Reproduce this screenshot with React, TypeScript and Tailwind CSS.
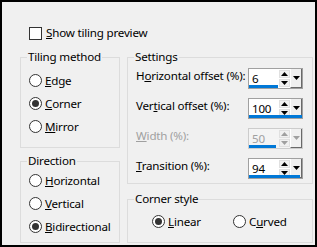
import React from "react";

function Radio({ checked, children, className = "" }: { checked?: boolean; children: React.ReactNode; className?: string }) {
  return (
    <div className={"flex items-center h-[23px] gap-[3px] " + className}>
      <span className="w-[13px] h-[13px] shrink-0 rounded-full border border-[#333333] bg-white flex items-center justify-center">
        {checked && <span className="w-[7px] h-[7px] rounded-full bg-[#333333]" />}
      </span>
      <span className="whitespace-nowrap">{children}</span>
    </div>
  );
}

function Group({ title, className = "", children }: { title: string; className?: string; children: React.ReactNode }) {
  return (
    <fieldset className={"border border-[#dcdcdc] " + className}>
      <legend className="ml-[6px] px-[1px] leading-[16px]">{title}</legend>
      {children}
    </fieldset>
  );
}

function Arrow({ up, color = "#000" }: { up?: boolean; color?: string }) {
  return (
    <svg width="7" height="4" viewBox="0 0 7 4">
      {up ? <path d="M0 4 L3.5 0 L7 4 Z" fill={color} /> : <path d="M0 0 L7 0 L3.5 4 Z" fill={color} />}
    </svg>
  );
}

function SpinBox({ value, bar, disabled }: { value: string; bar: number; disabled?: boolean }) {
  const arrow = disabled ? "#a0a0a0" : "#000";
  return (
    <div className={"relative flex w-[55px] h-[21px] border " + (disabled ? "border-[#cccccc] bg-[#f4f4f4]" : "border-[#a0a0a0] bg-white")}>
      <div className={"w-[30px] pl-[3px] pt-[2px] leading-[16px] " + (disabled ? "text-[#a0a0a0]" : "text-black")}>{value}</div>
      <div className="w-[11px] flex flex-col justify-center gap-[1px] py-[1px]">
        <div className="h-[8px] flex items-center justify-center bg-[#f0f0f0] border border-[#e0e0e0]">
          <Arrow up color={arrow} />
        </div>
        <div className="h-[8px] flex items-center justify-center bg-[#f0f0f0] border border-[#e0e0e0]">
          <Arrow color={arrow} />
        </div>
      </div>
      <div className="w-[12px] flex items-center justify-center bg-[#f0f0f0] border-l border-white border-r border-r-[#696969] border-b border-b-[#696969]">
        <Arrow color={arrow} />
      </div>
      <div className="absolute left-0 bottom-0 h-[3px] bg-[#0078d7]" style={{ width: bar }} />
    </div>
  );
}

function SpinRow({ label, value, bar, disabled }: { label: React.ReactNode; value: string; bar: number; disabled?: boolean }) {
  return (
    <div className="flex items-center h-[21px]">
      <span className={"w-[112px] mb-[5px] whitespace-nowrap " + (disabled ? "text-[#a0a0a0]" : "")}>{label}</span>
      <SpinBox value={value} bar={bar} disabled={disabled} />
    </div>
  );
}

export default function App() {
  return (
    <div className="w-[317px] h-[247px] bg-[#f0f0f0] border-2 border-black flex flex-col pt-[23px] pl-[18px] text-[11.6px] leading-[16px] tracking-[-0.2px] text-black font-['Noto_Sans','Liberation_Sans',sans-serif]">
      <div className="flex items-center h-[16px] ml-[9px] gap-[4px]">
        <span className="w-[13px] h-[13px] border border-[#333333] bg-white" />
        <span><u>S</u>how tiling preview</span>
      </div>

      <div className="mt-[8px] flex gap-[7px]">
        <div className="w-[100px] flex flex-col gap-[5px]">
          <Group title="Tiling method" className="h-[99px]">
            <div className="pt-[4px] pl-[8px]">
              <Radio><u>E</u>dge</Radio>
              <Radio checked><u>C</u>orner</Radio>
              <Radio><u>M</u>irror</Radio>
            </div>
          </Group>
          <Group title="Direction" className="h-[90px]">
            <div className="pl-[8px]">
              <Radio><u>H</u>orizontal</Radio>
              <Radio><u>V</u>ertical</Radio>
              <Radio checked><u>B</u>idirectional</Radio>
            </div>
          </Group>
        </div>

        <div className="w-[186px] flex flex-col gap-[7px]">
          <Group title="Settings" className="h-[135px]">
            <div className="pt-[3px] pl-[8px] flex flex-col gap-[9px]">
              <SpinRow label={<>H<u>o</u>rizontal offset (%):</>} value="6" bar={29} />
              <SpinRow label={<>Ver<u>t</u>ical offset (%):</>} value="100" bar={53} />
              <SpinRow label={<><u>W</u>idth (%):</>} value="50" bar={27} disabled />
              <SpinRow label={<><u>T</u>ransition (%):</>} value="94" bar={51} />
            </div>
          </Group>
          <Group title="Corner style" className="h-[52px]">
            <div className="pt-[3px] pl-[24px] flex">
              <Radio checked className="w-[81px]"><u>L</u>inear</Radio>
              <Radio>C<u>u</u>rved</Radio>
            </div>
          </Group>
        </div>
      </div>
    </div>
  );
}
